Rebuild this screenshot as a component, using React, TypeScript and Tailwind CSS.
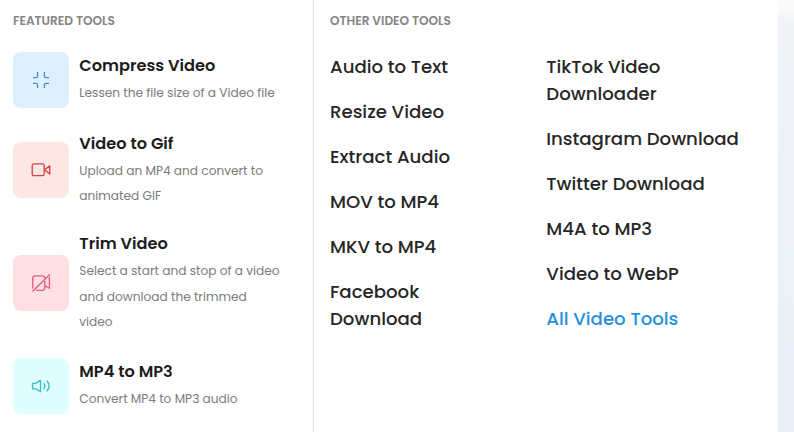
import {ReactNode} from 'react';

type FeaturedTool = {
  title: string;
  lines: string[];
  rowClass: string;
  iconClass: string;
  icon: ReactNode;
};

type ToolLink = {
  lines: string[];
  active?: boolean;
};

const featuredTools: FeaturedTool[] = [
  {
    title: 'Compress Video',
    lines: ['Lessen the file size of a Video file'],
    rowClass: 'h-14',
    iconClass: 'bg-[#e0effe] text-[#3a8fd8]',
    icon: (
      <path d="M6.6 2v4q0 1.6-1.6 1.6H2M13.4 2v4q0 1.6 1.6 1.6H18M6.6 18v-3.2q0-1.5-1.6-1.5H2M13.4 18v-3.2q0-1.5 1.6-1.5H18" />
    ),
  },
  {
    title: 'Video to Gif',
    lines: ['Upload an MP4 and convert to', 'animated GIF'],
    rowClass: 'mt-[23.4px] h-[78px]',
    iconClass: 'bg-[#fde7e4] text-[#d84040]',
    icon: (
      <>
        <rect x="1.2" y="3.9" width="12" height="11.8" rx="1.6" />
        <path d="M13.6 9.8l5.2-4v8.2z" />
      </>
    ),
  },
  {
    title: 'Trim Video',
    lines: ['Select a start and stop of a video', 'and download the trimmed', 'video'],
    rowClass: 'mt-[22.2px] h-[104px]',
    iconClass: 'mb-[0.6px] bg-[#ffdee4] text-[#ea5a80]',
    icon: (
      <path d="M1.7 15.5V5.5q0-2.7 2.7-2.7h6.7q2.7 0 2.7 2.7M5 17.3h6.1q2.7 0 2.7-2.7V8M14 12.8l4.4 2.4V3.8M1.5 18.5L19 1.2" />
    ),
  },
  {
    title: 'MP4 to MP3',
    lines: ['Convert MP4 to MP3 audio'],
    rowClass: 'mt-[22.4px] h-14',
    iconClass: 'bg-[#e0fdff] text-[#2cc3c6]',
    icon: (
      <path d="M1.5 7.4h3.2l4.8-3v11.4l-4.8-3H1.5zM12.6 7.2q2.6 2.8 0 5.8M15.8 4.8q4.8 5.2 0 10.4" />
    ),
  },
];

const leftLinks: ToolLink[] = [
  {lines: ['Audio to Text']},
  {lines: ['Resize Video']},
  {lines: ['Extract Audio']},
  {lines: ['MOV to MP4']},
  {lines: ['MKV to MP4']},
  {lines: ['Facebook', 'Download']},
];

const rightLinks: ToolLink[] = [
  {lines: ['TikTok Video', 'Downloader']},
  {lines: ['Instagram Download']},
  {lines: ['Twitter Download']},
  {lines: ['M4A to MP3']},
  {lines: ['Video to WebP']},
  {lines: ['All Video Tools'], active: true},
];

const LinkList = ({links}: {links: ToolLink[]}) => (
  <ul className="flex flex-col gap-[18px]">
    {links.map((link) => (
      <li key={link.lines[0]}>
        <a
          href="#"
          className={`block whitespace-nowrap text-[18.15px] leading-[27px] font-medium ${link.active ? 'text-[#2590dc]' : 'text-[#262626]'}`}
        >
          {link.lines.map((line) => (
            <span key={line} className="block">
              {line}
            </span>
          ))}
        </a>
      </li>
    ))}
  </ul>
);

const App = () => {
  return (
    <div className="flex h-[432px] w-[794px] overflow-hidden bg-white font-['Poppins','Inter',sans-serif]">
      <section className="w-[314px] shrink-0 border-r border-[#dedede] pl-[13px]">
        <h2 className="mt-3 mb-[22px] text-[12.15px] leading-[18px] font-semibold text-[#858585]">
          FEATURED TOOLS
        </h2>
        {featuredTools.map((tool) => (
          <a key={tool.title} href="#" className={`flex items-center ${tool.rowClass}`}>
            <span className={`flex size-14 shrink-0 items-center justify-center rounded-lg ${tool.iconClass}`}>
              <svg
                viewBox="0 0 20 20"
                className="size-5"
                fill="none"
                stroke="currentColor"
                strokeWidth="1.3"
                strokeLinejoin="round"
              >
                {tool.icon}
              </svg>
            </span>
            <span className="ml-[10.3px] block pb-[0.5px] whitespace-nowrap">
              <span className="mb-0.5 block text-[16.2px] leading-6 font-semibold text-[#1c1c1c]">
                {tool.title}
              </span>
              {tool.lines.map((line) => (
                <span key={line} className="block text-[12.17px] leading-[25.5px] text-[#7b7b7b]">
                  {line}
                </span>
              ))}
            </span>
          </a>
        ))}
      </section>
      <section className="w-[464px] shrink-0 pl-4">
        <h2 className="mt-3 mb-[23px] text-[12.15px] leading-[18px] font-semibold text-[#858585]">
          OTHER VIDEO TOOLS
        </h2>
        <div className="grid grid-cols-[216.3px_1fr]">
          <LinkList links={leftLinks} />
          <LinkList links={rightLinks} />
        </div>
      </section>
      <div className="flex-1 bg-linear-to-b from-[#fafafa] from-2% via-[#f1f3f7] via-5% to-[#e9eff8]" />
    </div>
  );
};

export default App;
